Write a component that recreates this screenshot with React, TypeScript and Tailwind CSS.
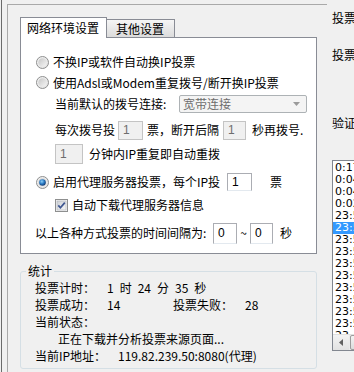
import React from "react"

const cjk = "font-['Noto_Sans_CJK_SC',sans-serif]"

const Radio = ({ checked }: { checked?: boolean }) => (
  <svg width="13" height="13" viewBox="0 0 13 13" className="flex-none">
    <defs>
      <linearGradient id="rOuter" x1="0" y1="0" x2="1" y2="1">
        <stop offset="0" stopColor="#f4f4f4" />
        <stop offset="1" stopColor="#e0e0e0" />
      </linearGradient>
      <linearGradient id="rInner" x1="0" y1="0" x2="1" y2="1">
        <stop offset="0" stopColor="#c6c6c6" />
        <stop offset="1" stopColor="#f6f6f6" />
      </linearGradient>
      <radialGradient id="rDot" cx="0.4" cy="0.35" r="0.7">
        <stop offset="0" stopColor="#8fd0f7" />
        <stop offset="0.5" stopColor="#2a7cc6" />
        <stop offset="1" stopColor="#0d2f66" />
      </radialGradient>
    </defs>
    <circle cx="6.5" cy="6.5" r="6" fill="url(#rOuter)" stroke="#8e8f8f" />
    <circle cx="6.5" cy="6.5" r="4.2" fill="url(#rInner)" />
    {checked && <circle cx="6.5" cy="6.5" r="3.3" fill="url(#rDot)" />}
  </svg>
)

const Check = () => (
  <svg width="13" height="13" viewBox="0 0 13 13" className="flex-none">
    <defs>
      <linearGradient id="cInner" x1="0" y1="0" x2="1" y2="1">
        <stop offset="0" stopColor="#cbcfd5" />
        <stop offset="1" stopColor="#f7f7f7" />
      </linearGradient>
    </defs>
    <rect x="0.5" y="0.5" width="12" height="12" fill="#f4f4f4" stroke="#8e8f8f" />
    <rect x="2" y="2" width="9" height="9" fill="url(#cInner)" stroke="#aeb3b9" strokeWidth="0.6" />
    <path d="M3.3 6.4 L5.4 8.8 L9.8 3.6" fill="none" stroke="#3d5590" strokeWidth="1.7" />
  </svg>
)

const Box = ({
  value,
  w,
  h,
  disabled,
}: {
  value: string
  w: string
  h: string
  disabled?: boolean
}) => (
  <div
    className={`${w} ${h} flex-none flex items-center pl-[4px] border font-['Liberation_Sans',sans-serif] text-[12px] ${
      disabled
        ? "bg-[#f0f0f0] border-[#c4c4c4] text-[#6d6d6d]"
        : "bg-white border-[#abadb3] border-b-[#e3e9ef] text-black"
    }`}
  >
    {value}
  </div>
)

const times = [
  "0:17:45",
  "0:04:33",
  "0:04:12",
  "0:02:51",
  "23:59:40",
  "23:58:27",
  "23:57:03",
  "23:56:48",
  "23:55:30",
  "23:54:19",
  "23:53:02",
  "23:52:44",
  "23:51:37",
  "23:50:15",
  "23:49:08",
]

export default function App() {
  return (
    <div
      className={`w-[354px] h-[372px] bg-[#f0f0f0] overflow-hidden flex text-[12px] leading-[14px] text-black ${cjk}`}
    >
      <div className="w-px flex-none" />
      <div className="w-px flex-none h-full bg-[#6b6b6b]" />
      <div className="w-[5px] flex-none" />

      {/* main frame */}
      <div className="mt-[4px] w-[320px] flex-none border-l border-t border-[#a9a9a9] pl-[12px] pt-[12px]">
        <div className="w-[297px]">
          {/* tabs */}
          <div className="h-[20px] flex items-end">
            <div className="relative z-10 -mb-px w-[87px] h-[21px] flex-none bg-white border-l border-t border-r border-[#898c95] pl-[6px] flex items-center">
              网络环境设置
            </div>
            <div className="-ml-px w-[69px] h-[18px] flex-none border-t border-r border-[#898c95] bg-gradient-to-b from-[#f5f5f5] to-[#dcdcdc] pl-[10px] flex items-center">
              其他设置
            </div>
          </div>

          {/* tab panel */}
          <div className="h-[217px] bg-white border border-[#898c95] pl-[14px] pt-[14px]">
            <div className="h-[20px] flex items-center gap-[4px] ml-px">
              <Radio />
              <span>不换IP或软件自动换IP投票</span>
            </div>
            <div className="h-[21px] flex items-center gap-[4px] ml-px">
              <Radio />
              <span>使用Adsl或Modem重复拨号/断开换IP投票</span>
            </div>
            <div className="mt-px h-[20px] flex items-center ml-[20px]">
              <span className="w-[124px] flex-none">当前默认的拨号连接:</span>
              <div className="w-[128px] h-[18px] flex-none flex items-center justify-between pl-[3px] pr-[6px] border border-[#adb2b5] rounded-[2px] bg-[#f4f4f4] text-[#6d6d6d]">
                <span>宽带连接</span>
                <svg width="7" height="4" viewBox="0 0 7 4">
                  <path d="M0 0 H7 L3.5 4 Z" fill="#9a9a9a" />
                </svg>
              </div>
            </div>
            <div className="mt-[6px] h-[20px] flex items-center ml-[20px]">
              <span className="w-[63px] flex-none">每次拨号投</span>
              <Box value="1" w="w-[25px]" h="h-[19px]" disabled />
              <span className="ml-[4px] w-[76px] flex-none">票，断开后隔</span>
              <Box value="1" w="w-[23px]" h="h-[19px]" disabled />
              <span className="ml-[6px]">秒再拨号.</span>
            </div>
            <div className="mt-[4px] h-[20px] flex items-center ml-[20px]">
              <Box value="1" w="w-[28px]" h="h-[20px]" disabled />
              <span className="ml-[6px]">分钟内IP重复即自动重拨</span>
            </div>
            <div className="mt-[8px] h-[20px] flex items-center ml-px">
              <Radio checked />
              <span className="ml-[4px] w-[174px] flex-none">启用代理服务器投票，每个IP投</span>
              <Box value="1" w="w-[25px]" h="h-[18px]" />
              <span className="ml-[18px]">票</span>
            </div>
            <div className="mt-[3px] h-[20px] flex items-center gap-[4px] ml-[20px]">
              <Check />
              <span>自动下载代理服务器信息</span>
            </div>
            <div className="mt-[7px] h-[22px] flex items-center">
              <span className="w-[178px] flex-none">以上各种方式投票的时间间隔为:</span>
              <Box value="0" w="w-[24px]" h="h-[21px]" />
              <span className="w-[13px] flex-none text-center">~</span>
              <Box value="0" w="w-[23px]" h="h-[21px]" />
              <span className="ml-[7px]">秒</span>
            </div>
          </div>

          {/* statistics group */}
          <div className="relative mt-[17px] h-[98px] border border-[#d5dfe5] rounded-[3px] pl-[14px] pt-[7px]">
            <span className="absolute -top-[8px] left-[5px] px-[2px] bg-[#f0f0f0]">统计</span>
            <div className="h-[17px] flex items-center">
              <span className="w-[72px] flex-none">投票计时：</span>
              <span className="flex gap-[6px]">
                <span>1</span>
                <span>时</span>
                <span>24</span>
                <span>分</span>
                <span>35</span>
                <span>秒</span>
              </span>
            </div>
            <div className="h-[17px] flex items-center">
              <span className="w-[72px] flex-none">投票成功：</span>
              <span className="w-[66px] flex-none">14</span>
              <span className="w-[72px] flex-none">投票失败：</span>
              <span>28</span>
            </div>
            <div className="h-[17px] flex items-center">
              <span>当前状态：</span>
            </div>
            <div className="h-[17px] flex items-center pl-[23px]">
              <span>正在下载并分析投票来源页面...</span>
            </div>
            <div className="h-[17px] flex items-center">
              <span className="w-[83px] flex-none">当前IP地址：</span>
              <span>119.82.239.50:8080(代理)</span>
            </div>
          </div>
        </div>
      </div>

      {/* right column */}
      <div className="w-[100px] flex-none pl-[5px] pt-[11px] flex flex-col">
        <div className="h-[14px] whitespace-nowrap">投票数量：</div>
        <div className="mt-[23px] h-[14px] whitespace-nowrap">投票间隔：</div>
        <div className="mt-[54px] h-[14px] whitespace-nowrap">验证码：</div>
        <div className="mt-[30px] w-[80px] h-[191px] flex flex-col bg-white border border-[#828790]">
          <div className="flex-1 overflow-hidden pt-px font-['DejaVu_Sans',sans-serif] text-[11px]">
            {times.map((t, i) => (
              <div
                key={i}
                className={`h-[12px] leading-[12px] pl-[2px] whitespace-nowrap ${
                  i === 5 ? "bg-[#3399ff] text-white" : "text-black"
                }`}
              >
                {t}
              </div>
            ))}
          </div>
          <div className="h-[16px] flex-none flex bg-[#eaeaea] border-t border-[#e0e0e0]">
            <div className="w-[16px] h-full flex items-center justify-center bg-gradient-to-b from-[#f3f3f3] to-[#e2e2e2]">
              <svg width="4" height="7" viewBox="0 0 4 7">
                <path d="M4 0 V7 L0 3.5 Z" fill="#606060" />
              </svg>
            </div>
            <div className="ml-px w-[40px] h-full border border-[#9c9c9c] rounded-[2px] bg-gradient-to-b from-[#f4f4f4] to-[#dcdcdc]" />
          </div>
        </div>
      </div>
    </div>
  )
}
